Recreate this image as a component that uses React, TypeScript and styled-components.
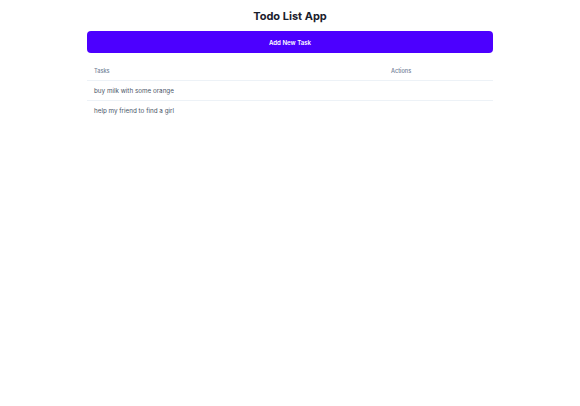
import React from "react";
import styled, { createGlobalStyle } from "styled-components";

const Global = createGlobalStyle`
  body { margin: 0; background: #fff; font-family: Inter, "Noto Sans", sans-serif; color: #2d3748; }
`;

const Page = styled.div`
  width: 406px;
  margin: 0 auto;
  padding-top: 8px;
  display: flex;
  flex-direction: column;
`;

const Title = styled.h1`
  margin: 0;
  font-size: 11px;
  font-weight: 700;
  line-height: 16px;
  color: #1a202c;
  text-align: center;
`;

const AddButton = styled.button`
  margin-top: 7px;
  height: 22px;
  border: none;
  border-radius: 4px;
  background: #4c00ff;
  color: #fff;
  font-family: inherit;
  font-size: 6.1px;
  font-weight: 600;
  cursor: pointer;
`;

const Table = styled.table`
  margin-top: 8px;
  width: 100%;
  border-collapse: collapse;
`;

const Th = styled.th<{ $w?: string }>`
  text-align: left;
  font-size: 5.6px;
  font-weight: 500;
  color: #718096;
  padding: 0 7px;
  height: 19px;
  line-height: 8px;
  border-bottom: 1px solid #edf2f7;
  width: ${(p) => p.$w ?? "auto"};
`;

const Td = styled.td<{ $last?: boolean }>`
  font-size: 6.3px;
  color: #4a5568;
  padding: 0 7px;
  height: 19px;
  line-height: 8px;
  border-bottom: ${(p) => (p.$last ? "none" : "1px solid #edf2f7")};
`;

const tasks = ["buy milk with some orange", "help my friend to find a girl"];

export default function App() {
  return (
    <>
      <Global />
      <Page>
        <Title>Todo List App</Title>
        <AddButton>Add New Task</AddButton>
        <Table>
          <thead>
            <tr>
              <Th>Tasks</Th>
              <Th $w="95px">Actions</Th>
            </tr>
          </thead>
          <tbody>
            {tasks.map((t, i) => (
              <tr key={t}>
                <Td $last={i === tasks.length - 1}>{t}</Td>
                <Td $last={i === tasks.length - 1} />
              </tr>
            ))}
          </tbody>
        </Table>
      </Page>
    </>
  );
}
